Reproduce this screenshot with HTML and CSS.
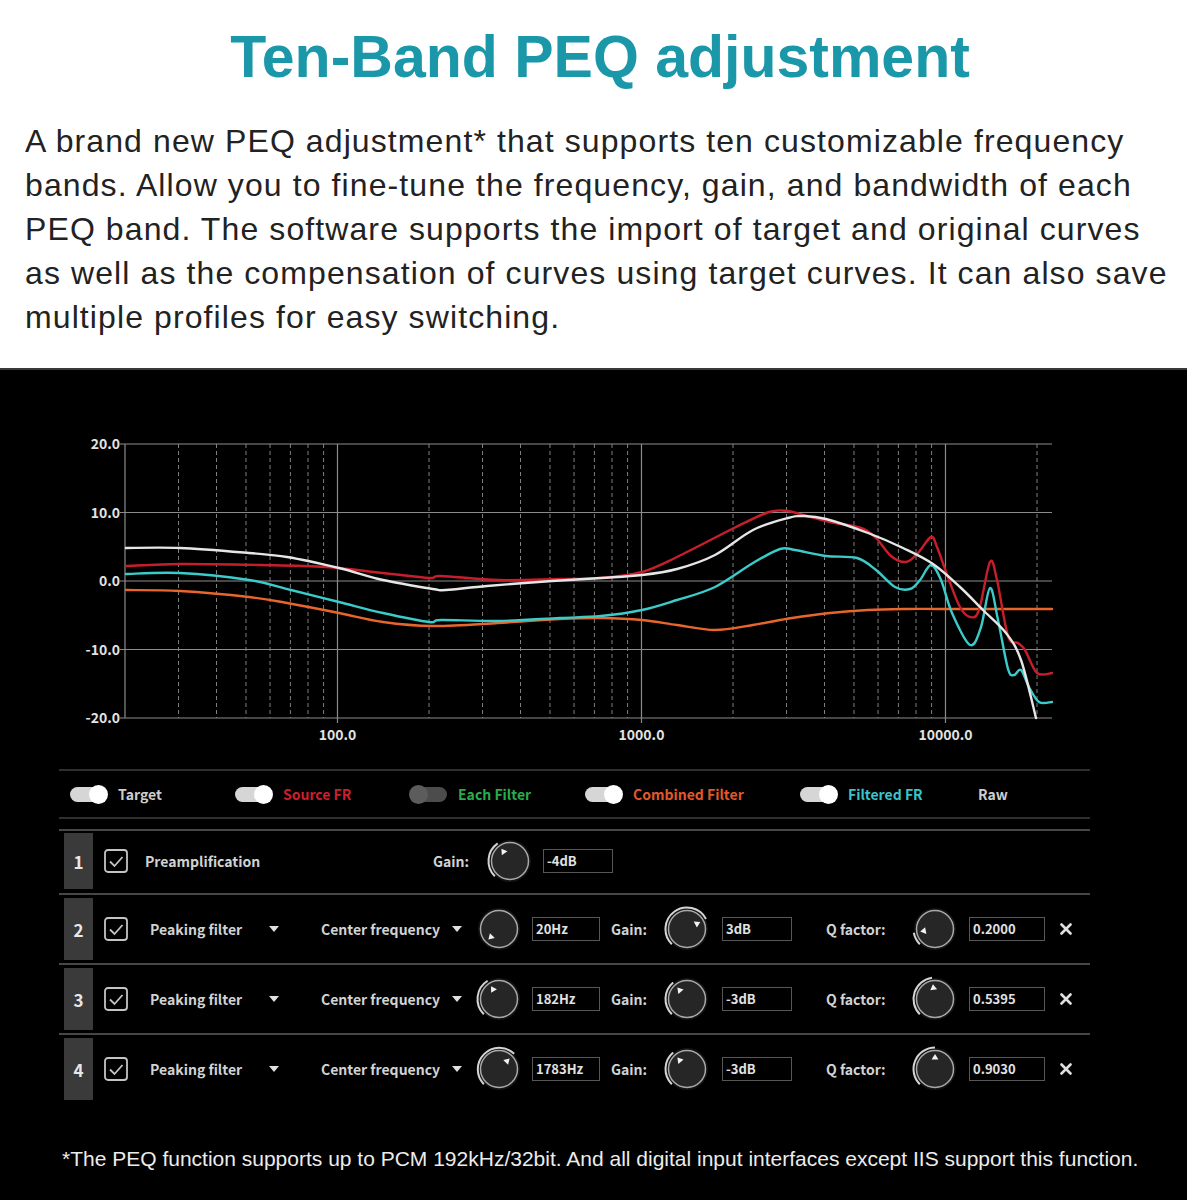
FILE: index.html
```html
<!DOCTYPE html>
<html lang="en">
<head>
    <meta charset="UTF-8">
    <meta name="viewport" content="width=device-width, initial-scale=1.0">
    <title>Ten-Band PEQ adjustment</title>
    <link rel="stylesheet" href="styles.css">
</head>
<body>
    <header class="intro">
        <h1>Ten-Band PEQ adjustment</h1>
        <p>A brand new PEQ adjustment* that supports ten customizable frequency<br>
        bands. Allow you to fine-tune the frequency, gain, and bandwidth of each<br>
        PEQ band. The software supports the import of target and original curves<br>
        as well as the compensation of curves using target curves. It can also save<br>
        multiple profiles for easy switching.</p>
    </header>

    <section class="panel">
        <!-- frequency response graph, drawn in page coordinates -->
        <svg id="graph" class="graph" width="1187" height="399" viewBox="0 370 1187 399">
            <g id="grid"></g>
            <g id="labels" class="axis-text"></g>
            <g id="curves" fill="none" stroke-width="2.4" stroke-linejoin="round" stroke-linecap="round"></g>
        </svg>

        <div class="legend">
            <div class="legend-item w1"><span class="toggle"></span><span class="c-target">Target</span></div>
            <div class="legend-item w2"><span class="toggle"></span><span class="c-source">Source FR</span></div>
            <div class="legend-item w2"><span class="toggle off"></span><span class="c-each">Each Filter</span></div>
            <div class="legend-item w3"><span class="toggle"></span><span class="c-combined">Combined Filter</span></div>
            <div class="legend-item w4"><span class="toggle"></span><span class="c-filtered">Filtered FR</span></div>
            <div class="legend-item"><span class="c-target">Raw</span></div>
        </div>

        <div class="bands">
            <div class="band band-pre">
                <div class="idx">1</div>
                <span class="chk"><svg width="24" height="24" viewBox="0 0 24 24"><rect x="1" y="1" width="22" height="22" rx="3"/><path d="M6 12.5l4.5 4.5 8-9"/></svg></span>
                <span class="name">Preamplification</span>
                <span class="field">Gain:</span>
                <span class="knob" data-angle="-35"></span>
                <span class="val val-g">-4dB</span>
            </div>

            <div class="band">
                <div class="idx">2</div>
                <span class="chk"><svg width="24" height="24" viewBox="0 0 24 24"><rect x="1" y="1" width="22" height="22" rx="3"/><path d="M6 12.5l4.5 4.5 8-9"/></svg></span>
                <span class="name">Peaking filter</span>
                <span class="caret"></span>
                <span class="name">Center frequency</span>
                <span class="caret"></span>
                <span class="knob" data-angle="-135"></span>
                <span class="val val-f">20Hz</span>
                <span class="field">Gain:</span>
                <span class="knob" data-angle="62"></span>
                <span class="val val-g">3dB</span>
                <span class="field">Q factor:</span>
                <span class="knob" data-angle="-100"></span>
                <span class="val val-q">0.2000</span>
                <svg class="close" width="12" height="12" viewBox="0 0 12 12"><path d="M1.5 1.5l9 9M10.5 1.5l-9 9"/></svg>
            </div>

            <div class="band">
                <div class="idx">3</div>
                <span class="chk"><svg width="24" height="24" viewBox="0 0 24 24"><rect x="1" y="1" width="22" height="22" rx="3"/><path d="M6 12.5l4.5 4.5 8-9"/></svg></span>
                <span class="name">Peaking filter</span>
                <span class="caret"></span>
                <span class="name">Center frequency</span>
                <span class="caret"></span>
                <span class="knob" data-angle="-32"></span>
                <span class="val val-f">182Hz</span>
                <span class="field">Gain:</span>
                <span class="knob" data-angle="-40"></span>
                <span class="val val-g">-3dB</span>
                <span class="field">Q factor:</span>
                <span class="knob" data-angle="-8"></span>
                <span class="val val-q">0.5395</span>
                <svg class="close" width="12" height="12" viewBox="0 0 12 12"><path d="M1.5 1.5l9 9M10.5 1.5l-9 9"/></svg>
            </div>

            <div class="band">
                <div class="idx">4</div>
                <span class="chk"><svg width="24" height="24" viewBox="0 0 24 24"><rect x="1" y="1" width="22" height="22" rx="3"/><path d="M6 12.5l4.5 4.5 8-9"/></svg></span>
                <span class="name">Peaking filter</span>
                <span class="caret"></span>
                <span class="name">Center frequency</span>
                <span class="caret"></span>
                <span class="knob" data-angle="45"></span>
                <span class="val val-f">1783Hz</span>
                <span class="field">Gain:</span>
                <span class="knob" data-angle="-40"></span>
                <span class="val val-g">-3dB</span>
                <span class="field">Q factor:</span>
                <span class="knob" data-angle="0"></span>
                <span class="val val-q">0.9030</span>
                <svg class="close" width="12" height="12" viewBox="0 0 12 12"><path d="M1.5 1.5l9 9M10.5 1.5l-9 9"/></svg>
            </div>
        </div>

        <p class="note">*The PEQ function supports up to PCM 192kHz/32bit. And all digital input interfaces except IIS support this function.</p>
    </section>

    <script>
        var NS = "http://www.w3.org/2000/svg";
        var X0 = 125, X1 = 1052, DECADE = 304, TOP = 444, STEP = 68.5;

        function fx(f) { return X0 + DECADE * Math.log10(f / 20); }

        function add(parent, name, attrs, text) {
            var node = document.createElementNS(NS, name);
            for (var k in attrs) node.setAttribute(k, attrs[k]);
            if (text) node.textContent = text;
            parent.appendChild(node);
            return node;
        }

        var grid = document.getElementById("grid");
        var labels = document.getElementById("labels");
        var bottom = TOP + STEP * 4;

        // dashed lines for 30..90, 200..900, 2000..9000 and 20k
        [1, 10, 100].forEach(function (m) {
            for (var n = 2; n <= 9; n++) {
                var f = n * 10 * m;
                if (f < 30) continue;
                add(grid, "line", { x1: fx(f), x2: fx(f), y1: TOP, y2: bottom, "class": "minor" });
            }
        });
        add(grid, "line", { x1: fx(20000), x2: fx(20000), y1: TOP, y2: bottom, "class": "minor" });

        [100, 1000, 10000].forEach(function (f) {
            add(grid, "line", { x1: fx(f), x2: fx(f), y1: TOP, y2: bottom + 5, "class": "major" });
            add(labels, "text", { x: fx(f), y: bottom + 22, "text-anchor": "middle" }, f.toFixed(1));
        });

        [20, 10, 0, -10, -20].forEach(function (db, i) {
            var y = TOP + i * STEP;
            add(grid, "line", { x1: X0 - 5, x2: X1, y1: y, y2: y, "class": "major" });
            add(labels, "text", { x: X0 - 5, y: y + 5, "text-anchor": "end" }, db.toFixed(1));
        });
        add(grid, "line", { x1: X0, x2: X0, y1: TOP, y2: bottom, "class": "major" });

        // smooth a list of points with catmull-rom segments
        function smooth(pts) {
            var d = "M" + pts[0][0] + " " + pts[0][1];
            for (var i = 0; i < pts.length - 1; i++) {
                var p0 = pts[i - 1] || pts[i], p1 = pts[i], p2 = pts[i + 1], p3 = pts[i + 2] || p2;
                d += " C" + (p1[0] + (p2[0] - p0[0]) / 6).toFixed(1) + " " + (p1[1] + (p2[1] - p0[1]) / 6).toFixed(1) +
                     " " + (p2[0] - (p3[0] - p1[0]) / 6).toFixed(1) + " " + (p2[1] - (p3[1] - p1[1]) / 6).toFixed(1) +
                     " " + p2[0] + " " + p2[1];
            }
            return d;
        }

        var curves = [
            { color: "#e8652c", pts: [[126,590],[180,591],[249,597],[287,603],[339,613],[383,622],[433,626],[498,623],[560,619],[601,618],[642,620],[677,625],[715,630],[753,625],[792,618],[830,613],[868,610],[906,609],[960,609],[1052,609]] },
            { color: "#c81e2c", pts: [[126,566],[180,564],[260,565],[326,567],[383,573],[429,578],[441,576],[498,580],[560,579],[601,578],[642,572],[677,557],[734,528],[769,512],[788,511],[803,515],[830,522],[861,528],[876,538],[891,556],[906,562],[918,553],[931,537],[937,547],[949,580],[960,607],[970,617],[979,610],[990,562],[997,580],[1008,636],[1018,643],[1025,650],[1037,673],[1052,673]] },
            { color: "#3ccbcb", pts: [[126,574],[180,573],[249,580],[291,590],[339,602],[383,613],[429,622],[441,620],[498,621],[560,618],[601,616],[642,610],[677,600],[715,587],[753,563],[780,549],[795,550],[826,556],[857,558],[876,570],[895,587],[910,589],[920,580],[931,565],[941,580],[952,613],[970,645],[981,627],[990,588],[998,620],[1008,669],[1014,675],[1021,670],[1029,687],[1039,702],[1052,702]] },
            { color: "#e6e6e6", pts: [[126,548],[180,548],[249,553],[287,557],[339,568],[383,580],[433,589],[446,590],[487,586],[552,581],[601,578],[642,575],[677,569],[715,555],[753,530],[788,518],[803,516],[826,519],[868,533],[903,548],[933,564],[960,587],[983,610],[1006,633],[1021,660],[1036,718]] }
        ];
        var layer = document.getElementById("curves");
        curves.forEach(function (c) {
            add(layer, "path", { d: smooth(c.pts), stroke: c.color });
        });

        // rotary knobs: angle in degrees, clockwise from the top, range -135..135
        function polar(a, r) {
            var t = a * Math.PI / 180;
            return (24 + r * Math.sin(t)).toFixed(2) + " " + (24 - r * Math.cos(t)).toFixed(2);
        }
        document.querySelectorAll(".knob").forEach(function (k) {
            var a = +k.dataset.angle;
            var arc = "";
            if (a > -135) {
                arc = '<path d="M' + polar(-135, 21.5) + " A21.5 21.5 0 " + (a + 135 > 180 ? 1 : 0) + " 1 " + polar(a, 21.5) +
                      '" fill="none" stroke="#d4d4d4" stroke-width="2"/>';
            }
            k.innerHTML = '<svg width="48" height="48" viewBox="0 0 48 48">' +
                '<circle cx="24" cy="24" r="21" fill="#141414"/>' + arc +
                '<circle cx="24" cy="24" r="18.5" fill="#262626" stroke="#a9a9a9" stroke-width="1.5"/>' +
                '<path d="M' + polar(a, 15) + " L" + polar(a - 20, 10) + " L" + polar(a + 20, 10) + ' Z" fill="#f2f2f2"/>' +
                "</svg>";
        });
    </script>
</body>
</html>
```

FILE: styles.css
```css
* {
    box-sizing: border-box;
}

body {
    margin: 0;
    background-color: #fff;
    font-family: "Liberation Sans", Arial, sans-serif;
}

.intro {
    padding-top: 24px;
}

.intro h1 {
    margin: 0;
    text-align: center;
    color: #1a97a9;
    font-size: 59px;
    line-height: 66px;
    font-weight: 700;
}

.intro p {
    margin: 29px 0 0 25px;
    font-size: 32px;
    line-height: 44px;
    letter-spacing: 1.1px;
    color: #222;
    white-space: nowrap;
}

/* dark software panel */
.panel {
    margin-top: 29px;
    width: 1187px;
    background-color: #000;
    border-top: 2px solid #3a3a3a;
    padding-bottom: 29px;
    font-family: "Noto Sans CJK SC", "Noto Sans", sans-serif;
    font-weight: 700;
    color: #d6d6d6;
}

.graph {
    display: block;
}

.graph .major {
    stroke: #8c8c8c;
    stroke-width: 1.2;
}

.graph .minor {
    stroke: #a0a0a0;
    stroke-width: 1;
    stroke-dasharray: 4 3;
    opacity: 0.8;
}

.axis-text {
    font-family: "Noto Sans CJK SC", "Noto Sans", sans-serif;
    font-size: 14px;
    font-weight: 700;
    fill: #e2e2e2;
}

.legend {
    margin-left: 59px;
    width: 1031px;
    height: 50px;
    border-top: 2px solid #2f2f2f;
    border-bottom: 2px solid #2f2f2f;
    padding-left: 11px;
    display: flex;
    align-items: center;
    font-size: 14px;
}

.legend-item {
    display: flex;
    align-items: center;
    gap: 11px;
}

.w1 { width: 165px; }
.w2 { width: 175px; }
.w3 { width: 215px; }
.w4 { width: 178px; }

.toggle {
    position: relative;
    width: 37px;
    height: 15px;
    border-radius: 8px;
    background-color: #d6d6d6;
}

.toggle::after {
    content: "";
    position: absolute;
    right: -1px;
    top: -2px;
    width: 19px;
    height: 19px;
    border-radius: 50%;
    background-color: #fff;
}

.toggle.off {
    background-color: #4c4c4c;
}

.toggle.off::after {
    right: auto;
    left: -1px;
    background-color: #5c5c5c;
}

.c-target { color: #cdcdcd; }
.c-source { color: #cc1f2d; }
.c-each { color: #2bab4b; }
.c-combined { color: #e2582b; }
.c-filtered { color: #3cc4cb; }

.bands {
    margin: 10px 0 0 59px;
    width: 1031px;
}

.band {
    border-top: 2px solid #474747;
    padding: 3px 0 3px 5px;
    display: grid;
    grid-template-columns: 40px 46px 119px 52px 131px 23px 57px 79px 52px 59px 104px 85px 58px 91px 20px;
    align-items: center;
    justify-items: start;
    font-size: 14px;
}

.band-pre {
    padding: 2px 0 4px 5px;
    grid-template-columns: 40px 41px 288px 53px 57px 80px;
}

.idx {
    width: 29px;
    height: 62px;
    background-color: #3a3a3a;
    color: #e8e8e8;
    font-size: 17px;
    display: flex;
    align-items: center;
    justify-content: center;
}

.band-pre .idx {
    height: 56px;
}

.chk svg {
    display: block;
    fill: none;
    stroke: #c4c4c4;
    stroke-width: 1.8;
}

.name,
.field {
    color: #d2d2d2;
    white-space: nowrap;
}

.caret {
    width: 0;
    height: 0;
    border-left: 5px solid transparent;
    border-right: 5px solid transparent;
    border-top: 6px solid #e0e0e0;
}

.knob svg {
    display: block;
}

.val {
    height: 24px;
    border: 1px solid #575757;
    padding-left: 3px;
    line-height: 22px;
    font-size: 13px;
    color: #e2e2e2;
}

.val-f { width: 68px; }
.val-g { width: 70px; }
.val-q { width: 76px; }

.close {
    display: block;
    stroke: #e0e0e0;
    stroke-width: 2.6;
    stroke-linecap: round;
}

.note {
    margin: 44px 0 0 62px;
    font-family: "Liberation Sans", Arial, sans-serif;
    font-weight: 400;
    font-size: 21px;
    line-height: 24px;
    color: #ececec;
    white-space: nowrap;
}
```
